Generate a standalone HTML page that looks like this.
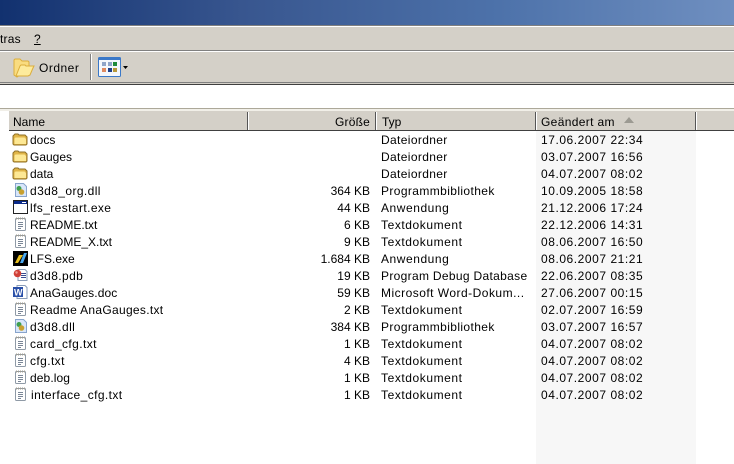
<!DOCTYPE html>
<html><head><meta charset="utf-8"><style>
html,body{margin:0;padding:0;background:#fff}
#p{position:relative;width:734px;height:464px;overflow:hidden;background:#fff;font:12px/17px "Liberation Sans",sans-serif;color:#000}
#p div.a{position:absolute}
.t{position:absolute;white-space:nowrap;line-height:17px;height:17px;margin-top:1px}
.r{text-align:right}
.n{left:30px}.s{letter-spacing:.4px}
.y{left:381px}.d{left:541px;letter-spacing:.55px}
.z{left:280px;width:90px;text-align:right}
.u{letter-spacing:.57px}.o{letter-spacing:.36px}.m{letter-spacing:.39px}.e{letter-spacing:.55px}
svg.i{position:absolute;left:12px;width:16px;height:16px}
</style></head><body><div id="p">
<div class="a" style="left:0;top:0;width:734px;height:25px;background:linear-gradient(90deg,#12316f 0%,#38568f 33%,#4d72aa 68%,#6f8fc0 100%)"></div>
<div class="a" style="left:0;top:25px;width:734px;height:2px;background:#fff;border-top:1px solid #808080;box-sizing:border-box"></div>
<div class="a" style="left:0;top:27px;width:734px;height:23px;background:#d4d0c8"></div>
<div class="a" style="left:0;top:50px;width:734px;height:1px;background:#808080"></div>
<div class="a" style="left:0;top:51px;width:734px;height:1px;background:#fff"></div>
<div class="a" style="left:0;top:52px;width:734px;height:30px;background:#d4d0c8"></div>
<div class="a" style="left:0;top:82px;width:734px;height:1px;background:#808080"></div>
<div class="a" style="left:0;top:83px;width:734px;height:1px;background:#d4d0c8"></div>
<div class="a" style="left:0;top:84px;width:734px;height:1px;background:#404040"></div>
<div class="a" style="left:0;top:108px;width:734px;height:1px;background:#aca899"></div>
<div class="a" style="left:0;top:109px;width:734px;height:2px;background:#f1efe8"></div>
<div class="t" style="left:0;top:30px;letter-spacing:.2px">tras</div>
<div class="t" style="left:34px;top:30px;text-decoration:underline">?</div>
<svg style="position:absolute;left:12px;top:56px" width="24" height="24" viewBox="0 0 24 24"><path d="M2 4l1-1h5l2 2h6l1 1v4L8 19l-3 2-3-2z" fill="#f9dc80" stroke="#dcae3c"/><path d="M8 10l1-1h4l1 1h8l-1 2-3 7-2 1H6l-2 0z" fill="#fdeb9c" stroke="#dcae3c"/></svg>
<div class="t" style="left:39px;top:59px;letter-spacing:.5px">Ordner</div>
<div class="a" style="left:90px;top:54px;width:1px;height:26px;background:#808080"></div>
<div class="a" style="left:91px;top:54px;width:1px;height:26px;background:#fff"></div>
<svg style="position:absolute;left:98px;top:57px" width="34" height="21" viewBox="0 0 34 21"><rect x=".5" y=".5" width="22" height="19" rx="1" fill="#f4f7fc" stroke="#3a78c8"/><rect x="1" y="1" width="21" height="2" fill="#3a78c8"/><rect x="4" y="5" width="4" height="4" fill="#8fa4c8"/><rect x="10" y="5" width="4" height="4" fill="#8fa4c8"/><rect x="15" y="5" width="4" height="4" fill="#1f8a3a"/><rect x="4" y="11" width="4" height="4" fill="#e08a60"/><rect x="10" y="11" width="4" height="4" fill="#1f3f88"/><rect x="15" y="11" width="4" height="4" fill="#b8983a"/><path d="M25 9h5l-2.500 3z" fill="#000"/></svg>
<div class="a" style="left:9px;top:111px;width:725px;height:19px;background:#d4d0c8"></div>
<div class="a" style="left:9px;top:130px;width:725px;height:1px;background:#404040"></div>
<div class="a" style="left:247px;top:112px;width:1px;height:18px;background:#555"></div><div class="a" style="left:248px;top:112px;width:1px;height:18px;background:#fff"></div>
<div class="a" style="left:375px;top:112px;width:1px;height:18px;background:#555"></div><div class="a" style="left:376px;top:112px;width:1px;height:18px;background:#fff"></div>
<div class="a" style="left:535px;top:112px;width:1px;height:18px;background:#555"></div><div class="a" style="left:536px;top:112px;width:1px;height:18px;background:#fff"></div>
<div class="a" style="left:695px;top:112px;width:1px;height:18px;background:#555"></div><div class="a" style="left:696px;top:112px;width:1px;height:18px;background:#fff"></div>
<div class="t" style="left:13px;top:113px">Name</div>
<div class="t z" style="top:113px;letter-spacing:.2px">Größe</div>
<div class="t" style="left:382px;top:113px">Typ</div>
<div class="t" style="left:541px;top:113px;letter-spacing:.35px">Geändert am</div>
<svg style="position:absolute;left:624px;top:117px" width="11" height="6"><path d="M0 6L5 0l5 6z" fill="#9c9a92"/></svg>
<div class="a" style="left:536px;top:131px;width:160px;height:333px;background:#f7f7f7"></div>
<svg width="0" height="0" style="position:absolute"><defs>
<g id="f"><path d="M1 13V5l2-2h3l1 1h6l2 2v7l-1 1H2z" fill="#e0b548" stroke="#8f7026"/><path d="M2.500 7.500l1-1h9l1.500 1.500v5H2.500z" fill="#fde894"/></g>
<g id="x"><rect x="3.500" y="2.500" width="10" height="12" rx="1" fill="#fff" stroke="#8f9aa6"/><path d="M6 6.500h5M6 8.500h5M6 10.500h5M6 12.500h3" stroke="#7a8696"/><path d="M4 2.500h9" stroke="#a09c90" stroke-dasharray="1 1" stroke-width="2"/></g>
<g id="d"><path d="M3.500 1.500h8l3 3v10h-11z" fill="#d8e6fa" stroke="#88a4cc"/><circle cx="7" cy="6.500" r="2.500" fill="#3f9f50"/><circle cx="9.500" cy="10" r="2.800" fill="#c8a030"/></g>
<g id="e"><rect x="1.500" y="1.500" width="14" height="13" fill="#fff" stroke="#222"/><rect x="2" y="2" width="13" height="3" fill="#0a2a8a"/><path d="M10 3.500h4" stroke="#fff"/></g>
<g id="l"><rect x="1" y="1" width="15" height="15" fill="#000"/><path d="M3 13L7 5h4L6 13z" fill="#e8c020"/><path d="M8 13l4-10h3l-4 10z" fill="#4aa8f0"/></g>
<g id="pd"><path d="M6 2.500h7l2 2v9H6z" fill="#fff" stroke="#8a9cb8"/><path d="M9 6.500h5M9 8.500h5M9 10.500h5" stroke="#3a4a90"/><circle cx="5.500" cy="6.500" r="3.800" fill="#d04038"/><circle cx="4.500" cy="5.500" r="1.200" fill="#f0a098"/></g>
<g id="w"><path d="M5 1.500h8l2 2v11H5z" fill="#fff" stroke="#8a9cb8"/><rect x="1" y="3" width="10" height="10" fill="#2a50a8"/><text x="2" y="11.500" font-size="9" font-weight="bold" fill="#fff" font-family="Liberation Sans">W</text></g>
</defs></svg>
<svg class="i" style="top:131px"><use href="#f"/></svg><div class="t n" style="top:131px">docs</div><div class="t y o" style="top:131px">Dateiordner</div><div class="t d" style="top:131px">17.06.2007 22:34</div>
<svg class="i" style="top:148px"><use href="#f"/></svg><div class="t n" style="top:148px">Gauges</div><div class="t y o" style="top:148px">Dateiordner</div><div class="t d" style="top:148px">03.07.2007 16:56</div>
<svg class="i" style="top:165px"><use href="#f"/></svg><div class="t n" style="top:165px">data</div><div class="t y o" style="top:165px">Dateiordner</div><div class="t d" style="top:165px">04.07.2007 08:02</div>
<svg class="i" style="top:182px"><use href="#d"/></svg><div class="t n s" style="top:182px">d3d8_org.dll</div><div class="t z" style="top:182px">364 KB</div><div class="t y m" style="top:182px">Programmbibliothek</div><div class="t d" style="top:182px">10.09.2005 18:58</div>
<svg class="i" style="top:199px"><use href="#e"/></svg><div class="t n s" style="top:199px">lfs_restart.exe</div><div class="t z" style="top:199px">44 KB</div><div class="t y e" style="top:199px">Anwendung</div><div class="t d" style="top:199px">21.12.2006 17:24</div>
<svg class="i" style="top:216px"><use href="#x"/></svg><div class="t n" style="top:216px">README.txt</div><div class="t z" style="top:216px">6 KB</div><div class="t y u" style="top:216px">Textdokument</div><div class="t d" style="top:216px">22.12.2006 14:31</div>
<svg class="i" style="top:233px"><use href="#x"/></svg><div class="t n" style="top:233px">README_X.txt</div><div class="t z" style="top:233px">9 KB</div><div class="t y u" style="top:233px">Textdokument</div><div class="t d" style="top:233px">08.06.2007 16:50</div>
<svg class="i" style="top:250px"><use href="#l"/></svg><div class="t n" style="top:250px">LFS.exe</div><div class="t z" style="top:250px">1.684 KB</div><div class="t y e" style="top:250px">Anwendung</div><div class="t d" style="top:250px">08.06.2007 21:21</div>
<svg class="i" style="top:267px"><use href="#pd"/></svg><div class="t n s" style="top:267px">d3d8.pdb</div><div class="t z" style="top:267px">19 KB</div><div class="t y" style="top:267px;letter-spacing:.32px">Program Debug Database</div><div class="t d" style="top:267px">22.06.2007 08:35</div>
<svg class="i" style="top:284px"><use href="#w"/></svg><div class="t n" style="top:284px;letter-spacing:.1px">AnaGauges.doc</div><div class="t z" style="top:284px">59 KB</div><div class="t y" style="top:284px;letter-spacing:.48px">Microsoft Word-Dokum...</div><div class="t d" style="top:284px">27.06.2007 00:15</div>
<svg class="i" style="top:301px"><use href="#x"/></svg><div class="t n" style="top:301px;letter-spacing:.3px">Readme AnaGauges.txt</div><div class="t z" style="top:301px">2 KB</div><div class="t y u" style="top:301px">Textdokument</div><div class="t d" style="top:301px">02.07.2007 16:59</div>
<svg class="i" style="top:318px"><use href="#d"/></svg><div class="t n s" style="top:318px">d3d8.dll</div><div class="t z" style="top:318px">384 KB</div><div class="t y m" style="top:318px">Programmbibliothek</div><div class="t d" style="top:318px">03.07.2007 16:57</div>
<svg class="i" style="top:335px"><use href="#x"/></svg><div class="t n s" style="top:335px">card_cfg.txt</div><div class="t z" style="top:335px">1 KB</div><div class="t y u" style="top:335px">Textdokument</div><div class="t d" style="top:335px">04.07.2007 08:02</div>
<svg class="i" style="top:352px"><use href="#x"/></svg><div class="t n s" style="top:352px">cfg.txt</div><div class="t z" style="top:352px">4 KB</div><div class="t y u" style="top:352px">Textdokument</div><div class="t d" style="top:352px">04.07.2007 08:02</div>
<svg class="i" style="top:369px"><use href="#x"/></svg><div class="t n" style="top:369px;letter-spacing:.1px">deb.log</div><div class="t z" style="top:369px">1 KB</div><div class="t y u" style="top:369px">Textdokument</div><div class="t d" style="top:369px">04.07.2007 08:02</div>
<svg class="i" style="top:386px"><use href="#x"/></svg><div class="t s" style="left:31px;top:386px">interface_cfg.txt</div><div class="t z" style="top:386px">1 KB</div><div class="t y u" style="top:386px">Textdokument</div><div class="t d" style="top:386px">04.07.2007 08:02</div>
</div></body></html>
